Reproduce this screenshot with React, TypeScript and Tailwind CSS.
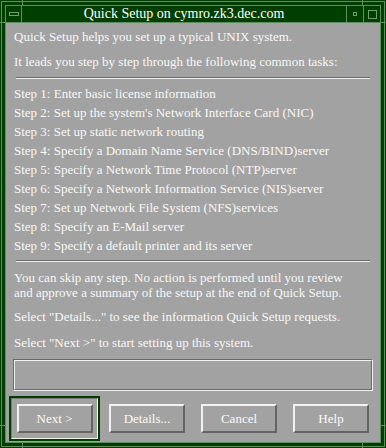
import React from 'react';

// Motif-style dialog frame colours
const steps = [
  'Step 1: Enter basic license information',
  "Step 2: Set up the system's Network Interface Card (NIC)",
  'Step 3: Set up static network routing',
  'Step 4: Specify a Domain Name Service (DNS/BIND)server',
  'Step 5: Specify a Network Time Protocol (NTP)server',
  'Step 6: Specify a Network Information Service (NIS)server',
  'Step 7: Set up Network File System (NFS)services',
  'Step 8: Specify an E-Mail server',
  'Step 9: Specify a default printer and its server',
];

const MotifButton: React.FC<{ label: string }> = ({ label }) => (
  <button className="w-[76px] h-[29px] flex items-center justify-center border-2 border-t-[#f2f2f2] border-l-[#f2f2f2] border-b-[#646464] border-r-[#646464] bg-[#a2a2a2] text-[#fafafa] text-[13px] leading-none">
    {label}
  </button>
);

const Separator: React.FC<{ className?: string }> = ({ className }) => (
  <div className={`mx-[3px] h-[2px] border-t border-t-[#6a6a6a] border-b border-b-[#f2f2f2] ${className ?? ''}`} />
);

const App: React.FC = () => {
  return (
    <div
      className="relative w-[386px] h-[448px] bg-[#003f00] p-px"
      style={{ fontFamily: '"Liberation Serif", "DejaVu Serif", serif' }}
    >
      {/* resize handle marks */}
      <div className="absolute left-[22px] top-0 w-px h-[6px] bg-[#5f8f5f]" />
      <div className="absolute left-[362px] top-0 w-px h-[6px] bg-[#5f8f5f]" />
      <div className="absolute left-0 top-[22px] w-[6px] h-px bg-[#5f8f5f]" />
      <div className="absolute right-0 top-[22px] w-[6px] h-px bg-[#5f8f5f]" />
      <div className="absolute left-[22px] bottom-0 w-px h-[6px] bg-[#5f8f5f]" />
      <div className="absolute left-[362px] bottom-0 w-px h-[6px] bg-[#5f8f5f]" />
      <div className="absolute left-0 top-[425px] w-[6px] h-px bg-[#5f8f5f]" />
      <div className="absolute right-0 top-[425px] w-[6px] h-px bg-[#5f8f5f]" />

      <div className="h-full border border-[#5f8f5f] p-[3px]">
        <div className="h-full flex flex-col border border-[#5f8f5f]">
          {/* title bar */}
          <div className="h-[17px] flex border-b border-[#5f8f5f]">
            <div className="w-[16px] flex items-center justify-center border-r border-[#5f8f5f]">
              <div className="w-[10px] h-[4px] border border-[#6f9f6f]" />
            </div>
            <div className="flex-1 flex items-center justify-center text-white text-[14px] leading-none">
              Quick Setup on cymro.zk3.dec.com
            </div>
            <div className="w-[17px] flex items-center justify-center border-l border-[#5f8f5f]">
              <div className="w-[4px] h-[4px] border border-[#6f9f6f]" />
            </div>
            <div className="w-[17px] flex items-center justify-center border-l border-[#5f8f5f]">
              <div className="w-[9px] h-[9px] border border-[#6f9f6f]" />
            </div>
          </div>

          {/* body */}
          <div className="flex-1 flex flex-col bg-[#a2a2a2] px-[7px] pt-[4px] text-[#f8f8f8] text-[13px]">
            <p className="ml-px leading-[19px]">Quick Setup helps you set up a typical UNIX system.</p>
            <p className="ml-px mt-[6px] leading-[19px]">It leads you step by step through the following common tasks:</p>
            <Separator className="mt-[6px]" />
            <ul className="mt-[5px]">
              {steps.map((s) => (
                <li key={s} className="ml-px leading-[19px]">{s}</li>
              ))}
            </ul>
            <Separator className="mt-[5px]" />
            <p className="ml-px mt-[8px] leading-[15px]">
              You can skip any step. No action is performed until you review
              <br />
              and approve a summary of the setup at the end of Quick Setup.
            </p>
            <p className="ml-px mt-[9px] leading-[15px]">Select "Details..." to see the information Quick Setup requests.</p>
            <p className="ml-px mt-[11px] leading-[15px]">Select "Next &gt;" to start setting up this system.</p>

            <div className="mt-[9px] h-[32px] border border-t-[#6a6a6a] border-l-[#6a6a6a] border-b-[#f2f2f2] border-r-[#f2f2f2]">
              <div className="h-full border border-t-[#f2f2f2] border-l-[#f2f2f2] border-b-[#6a6a6a] border-r-[#6a6a6a]" />
            </div>

            <div className="mt-[5px] -ml-[4px] flex items-center">
              <div className="w-[91px] h-[45px] border-2 border-[#003f00]">
                <div className="h-full flex items-center justify-center border border-t-[#7a7a7a] border-l-[#7a7a7a] border-b-[#f2f2f2] border-r-[#f2f2f2]">
                  <MotifButton label="Next >" />
                </div>
              </div>
              <div className="ml-[9px] flex gap-[16px]">
                <MotifButton label="Details..." />
                <MotifButton label="Cancel" />
                <MotifButton label="Help" />
              </div>
            </div>
          </div>
        </div>
      </div>
    </div>
  );
};

export default App;
